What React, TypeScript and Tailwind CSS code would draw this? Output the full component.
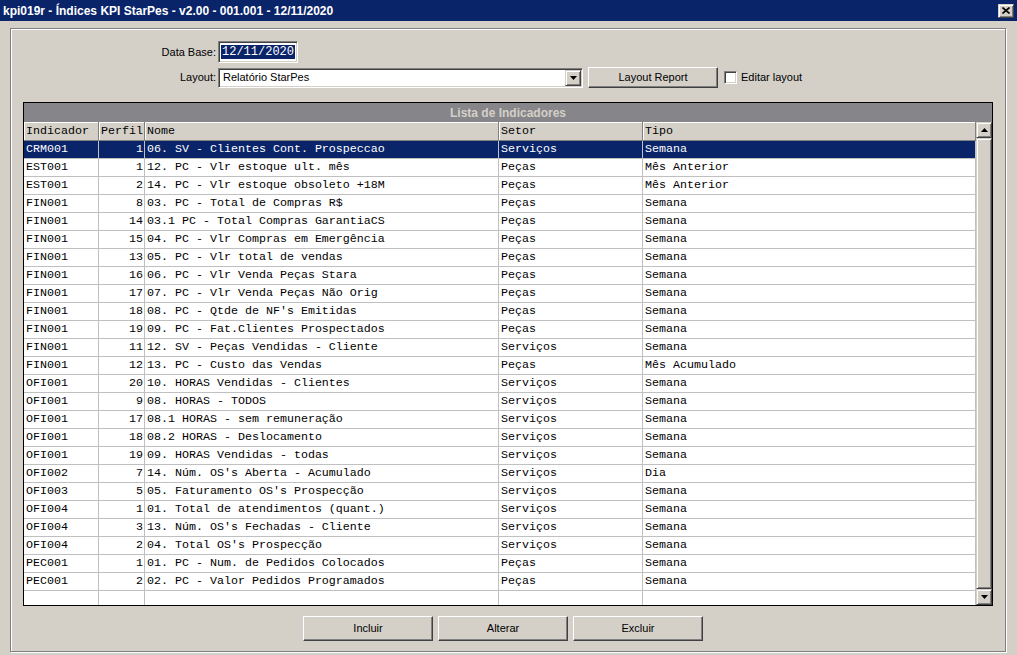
const ui = "font-['Liberation_Sans',Arial,sans-serif] text-[11px] text-black";
const mono = "font-['Liberation_Mono','Courier_New',monospace] text-[11.67px]";

const raised =
  "border border-t-white border-l-white border-r-[#404040] border-b-[#404040] shadow-[inset_-1px_-1px_0_#808080]";
const raisedSmall =
  "border border-t-[#d4d0c8] border-l-[#d4d0c8] border-r-[#404040] border-b-[#404040] shadow-[inset_1px_1px_0_#fff,inset_-1px_-1px_0_#808080]";
const sunken =
  "border border-t-[#808080] border-l-[#808080] border-b-white border-r-white shadow-[inset_1px_1px_0_#404040,inset_-1px_-1px_0_#d4d0c8]";

const cols = [
  { label: "Indicador", w: "w-[75px]" },
  { label: "Perfil", w: "w-[46px]", right: true },
  { label: "Nome", w: "w-[354px]" },
  { label: "Setor", w: "w-[144px]" },
  { label: "Tipo", w: "w-[333px]" },
];

const rows: string[][] = [
  ["CRM001", "1", "06. SV - Clientes Cont. Prospeccao", "Serviços", "Semana"],
  ["EST001", "1", "12. PC - Vlr estoque ult. mês", "Peças", "Mês Anterior"],
  ["EST001", "2", "14. PC - Vlr estoque obsoleto +18M", "Peças", "Mês Anterior"],
  ["FIN001", "8", "03. PC - Total de Compras R$", "Peças", "Semana"],
  ["FIN001", "14", "03.1 PC - Total Compras GarantiaCS", "Peças", "Semana"],
  ["FIN001", "15", "04. PC - Vlr Compras em Emergência", "Peças", "Semana"],
  ["FIN001", "13", "05. PC - Vlr total de vendas", "Peças", "Semana"],
  ["FIN001", "16", "06. PC - Vlr Venda Peças Stara", "Peças", "Semana"],
  ["FIN001", "17", "07. PC - Vlr Venda Peças Não Orig", "Peças", "Semana"],
  ["FIN001", "18", "08. PC - Qtde de NF's Emitidas", "Peças", "Semana"],
  ["FIN001", "19", "09. PC - Fat.Clientes Prospectados", "Peças", "Semana"],
  ["FIN001", "11", "12. SV - Peças Vendidas - Cliente", "Serviços", "Semana"],
  ["FIN001", "12", "13. PC - Custo das Vendas", "Peças", "Mês Acumulado"],
  ["OFI001", "20", "10. HORAS Vendidas - Clientes", "Serviços", "Semana"],
  ["OFI001", "9", "08. HORAS - TODOS", "Serviços", "Semana"],
  ["OFI001", "17", "08.1 HORAS - sem remuneração", "Serviços", "Semana"],
  ["OFI001", "18", "08.2 HORAS - Deslocamento", "Serviços", "Semana"],
  ["OFI001", "19", "09. HORAS Vendidas - todas", "Serviços", "Semana"],
  ["OFI002", "7", "14. Núm. OS's Aberta - Acumulado", "Serviços", "Dia"],
  ["OFI003", "5", "05. Faturamento OS's Prospecção", "Serviços", "Semana"],
  ["OFI004", "1", "01. Total de atendimentos (quant.)", "Serviços", "Semana"],
  ["OFI004", "3", "13. Núm. OS's Fechadas - Cliente", "Serviços", "Semana"],
  ["OFI004", "2", "04. Total OS's Prospecção", "Serviços", "Semana"],
  ["PEC001", "1", "01. PC - Num. de Pedidos Colocados", "Peças", "Semana"],
  ["PEC001", "2", "02. PC - Valor Pedidos Programados", "Peças", "Semana"],
  ["", "", "", "", ""],
];

function Arrow({ up }: { up?: boolean }) {
  return (
    <svg width="7" height="4" viewBox="0 0 7 4">
      <polygon points={up ? "0,4 3.5,0 7,4" : "0,0 7,0 3.5,4"} fill="#000" />
    </svg>
  );
}

function Button({ label, w }: { label: string; w: string }) {
  return (
    <div className={`${raised} ${w} flex items-center justify-center bg-[#d4d0c8] ${ui}`}>
      {label}
    </div>
  );
}

export default function App() {
  return (
    <div className="w-[1017px] h-[655px] bg-[#d4d0c8] overflow-hidden flex flex-col">
      {/* title bar */}
      <div className="h-[21px] bg-[#0a246a] flex items-center justify-between pl-[3px] pr-[3px] shrink-0">
        <span className="font-['Liberation_Sans',Arial,sans-serif] text-[12px] font-bold text-white leading-none">
          kpi019r - Índices KPI StarPes - v2.00 - 001.001 - 12/11/2020
        </span>
        <div className={`${raisedSmall} w-[16px] h-[14px] bg-[#d4d0c8] flex items-center justify-center`}>
          <svg width="8" height="7" viewBox="0 0 8 7">
            <path d="M0.5 0.5 L7.5 6.5 M7.5 0.5 L0.5 6.5" stroke="#000" strokeWidth="1.6" />
          </svg>
        </div>
      </div>

      {/* group box */}
      <div className="ml-[10px] mt-[7px] w-[996px] h-[624px] border border-[#808080] shadow-[inset_1px_1px_0_#fff,1px_1px_0_#fff] flex flex-col">
        {/* Data Base */}
        <div className="mt-[12px] h-[22px] flex items-center">
          <span className={`${ui} w-[205px] text-right pt-[1px]`}>Data Base:</span>
          <div className={`${sunken} ml-[2px] w-[80px] h-[22px] bg-white flex items-center pl-[2px]`}>
            <span className="font-['Liberation_Mono','Courier_New',monospace] text-[12px] leading-[14px] bg-[#0a246a] text-white px-[1px]">
              12/11/2020
            </span>
          </div>
        </div>

        {/* Layout */}
        <div className="mt-[4px] h-[21px] flex items-center">
          <span className={`${ui} w-[205px] text-right`}>Layout:</span>
          <div className={`${sunken} ml-[2px] w-[365px] h-[20px] bg-white flex items-stretch p-[1px]`}>
            <span className={`${ui} flex-1 flex items-center pl-[3px]`}>Relatório StarPes</span>
            <div className={`${raisedSmall} w-[16px] bg-[#d4d0c8] flex items-center justify-center`}>
              <Arrow />
            </div>
          </div>
          <div className="ml-[5px] h-[21px] flex">
            <Button label="Layout Report" w="w-[130px]" />
          </div>
          <div className={`${sunken} ml-[6px] w-[13px] h-[13px] bg-white`} />
          <span className={`${ui} ml-[4px]`}>Editar layout</span>
        </div>

        {/* grid */}
        <div className="ml-[12px] mt-[14px] w-[970px] h-[504px] border border-black flex flex-col">
          <div className="h-[19px] bg-[#868589] flex items-center justify-center shrink-0">
            <span className="font-['Liberation_Sans',Arial,sans-serif] text-[12px] font-bold text-[#d4d0c8]">
              Lista de Indicadores
            </span>
          </div>
          <div className="flex h-[483px]">
            <div className={`w-[952px] overflow-hidden ${mono}`}>
              <div className="flex h-[19px]">
                {cols.map((c) => (
                  <div
                    key={c.label}
                    className={`${c.w} border-r border-b border-[#808080] shadow-[inset_1px_1px_0_#fff] bg-[#d4d0c8] pl-[2px] pt-[1px] flex items-center text-black`}
                  >
                    {c.label}
                  </div>
                ))}
              </div>
              {rows.map((r, i) => (
                <div
                  key={i}
                  className={`flex h-[18px] ${i === 0 ? "bg-[#0a246a] text-white" : "bg-white text-black"}`}
                >
                  {cols.map((c, j) => (
                    <div
                      key={j}
                      className={`${c.w} border-r border-b border-[#c0c0c0] pt-[1px] flex items-center whitespace-pre ${
                        c.right ? "justify-end pr-[1px]" : "pl-[2px]"
                      }`}
                    >
                      {r[j]}
                    </div>
                  ))}
                </div>
              ))}
            </div>
            {/* scrollbar */}
            <div className="w-[16px] flex flex-col bg-[#d4d0c8]">
              <div className={`${raisedSmall} h-[16px] flex items-center justify-center`}>
                <Arrow up />
              </div>
              <div className={`${raisedSmall} flex-1`} />
              <div className={`${raisedSmall} h-[16px] flex items-center justify-center`}>
                <Arrow />
              </div>
            </div>
          </div>
        </div>

        {/* buttons */}
        <div className="ml-[292px] mt-[10px] h-[25px] flex gap-[5px]">
          <Button label="Incluir" w="w-[130px]" />
          <Button label="Alterar" w="w-[130px]" />
          <Button label="Excluir" w="w-[130px]" />
        </div>
      </div>
    </div>
  );
}
